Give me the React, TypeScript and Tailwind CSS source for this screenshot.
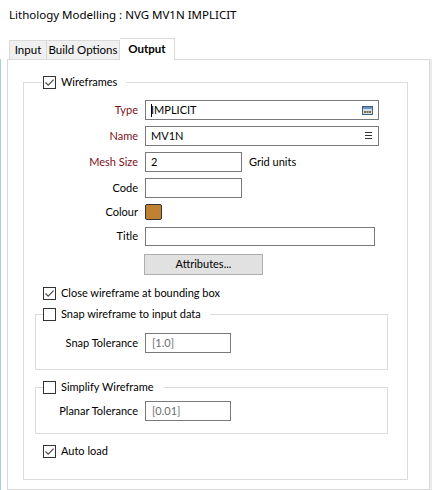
import React from "react";

const Check = ({ checked }: { checked?: boolean }) => (
  <span className="w-[13px] h-[13px] border border-[#333333] bg-white flex items-center justify-center shrink-0">
    {checked && (
      <svg width="11" height="11" viewBox="0 0 11 11">
        <path d="M1.5 5.5 L4.2 8.2 L9.6 2.6" stroke="#4d4d4d" strokeWidth="1.2" fill="none" />
      </svg>
    )}
  </span>
);

const Label = ({ children, w, red }: { children: React.ReactNode; w: string; red?: boolean }) => (
  <span className={`${w} text-right shrink-0 whitespace-nowrap ${red ? "text-[#7d1020]" : "text-black"}`}>{children}</span>
);

export default function App() {
  return (
    <div
      className="w-[443px] h-[490px] bg-white overflow-hidden text-[11px] text-black flex flex-col"
      style={{ fontFamily: 'Lato, "Noto Sans", sans-serif' }}
    >
      {/* title */}
      <div
        className="h-[38px] pl-[9px] pt-[6px] leading-[18px] text-[11.5px]"
        style={{ fontFamily: '"Noto Sans", sans-serif' }}
      >
        Lithology Modelling : NVG MV1N IMPLICIT
      </div>

      {/* tabs */}
      <div className="flex items-end h-[22px] pl-[9px] relative z-10 -mb-px text-[11.5px]">
        <div className="w-[38px] h-[19px] mb-px bg-[#f0f0f0] border border-b-0 border-[#d9d9d9] flex items-center justify-center leading-none">
          Input
        </div>
        <div className="w-[73px] h-[19px] mb-px bg-[#f0f0f0] border border-l-0 border-b-0 border-[#d9d9d9] flex items-center justify-center leading-none whitespace-nowrap">
          Build Options
        </div>
        <div className="w-[55px] h-[22px] bg-white border border-l-0 border-b-0 border-[#d9d9d9] flex items-center justify-center font-bold leading-none pb-[2px]">
          Output
        </div>
      </div>

      {/* body */}
      <div className="flex flex-1">
        <div className="w-px bg-[#a9cdef] self-stretch" />
        <div className="ml-[6px] w-[423px] border border-[#d9d9d9] pl-[15px] pt-[22px] shadow-[2px_0_0_#ebebeb]">
          {/* outer group */}
          <div className="w-[385px] border border-[#dcdcdc] pb-[21px] flex flex-col">
            <div className="-mt-[7px] ml-[18px] self-start flex items-center gap-[5px] bg-white pl-px pr-[9px] h-[13px]">
              <Check checked />
              <span>Wireframes</span>
            </div>

            {/* Type */}
            <div className="mt-[11px] h-[20px] flex items-center">
              <Label w="w-[114px]" red>Type</Label>
              <div className="ml-[7px] w-[234px] h-[20px] border border-[#7a7a7a] flex items-center pl-[5px] pr-[5px]">
                <span className="w-px h-[13px] bg-black mr-[-1px]" />
                <span className="flex-1">IMPLICIT</span>
                <svg width="11" height="9" viewBox="0 0 11 9">
                  <rect x="0.5" y="0.5" width="10" height="8" fill="#cfe0f2" stroke="#3f5f82" />
                  <rect x="1" y="1" width="9" height="2" fill="#6f93bd" />
                  <rect x="2" y="5" width="2" height="2" fill="#8a6a2e" />
                  <rect x="4.5" y="5" width="2" height="2" fill="#8a6a2e" />
                  <rect x="7" y="5" width="2" height="2" fill="#8a6a2e" />
                </svg>
              </div>
            </div>

            {/* Name */}
            <div className="mt-[6px] h-[20px] flex items-center">
              <Label w="w-[114px]" red>Name</Label>
              <div className="ml-[7px] w-[234px] h-[20px] border border-[#7a7a7a] flex items-center pl-[5px] pr-[6px]">
                <span className="flex-1">MV1N</span>
                <svg width="7" height="8" viewBox="0 0 7 8">
                  <rect x="0" y="0" width="7" height="1" fill="#333" />
                  <rect x="0" y="3" width="7" height="1" fill="#333" />
                  <rect x="0" y="6" width="7" height="1" fill="#333" />
                </svg>
              </div>
            </div>

            {/* Mesh Size */}
            <div className="mt-[6px] h-[20px] flex items-center">
              <Label w="w-[114px]" red>Mesh Size</Label>
              <div className="ml-[7px] w-[97px] h-[20px] border border-[#7a7a7a] flex items-center pl-[5px]">2</div>
              <span className="ml-[7px]">Grid units</span>
            </div>

            {/* Code */}
            <div className="mt-[6px] h-[20px] flex items-center">
              <Label w="w-[114px]">Code</Label>
              <div className="ml-[7px] w-[97px] h-[20px] border border-[#7a7a7a]" />
            </div>

            {/* Colour */}
            <div className="mt-[6px] h-[17px] flex items-center">
              <Label w="w-[114px]">Colour</Label>
              <div className="ml-[7px] w-[17px] h-[16px] border border-[#333333] rounded-[2px] bg-[#c08232] self-start" />
            </div>

            {/* Title */}
            <div className="mt-[6px] h-[19px] flex items-center">
              <Label w="w-[114px]">Title</Label>
              <div className="ml-[7px] w-[230px] h-[19px] border border-[#7a7a7a]" />
            </div>

            {/* Attributes */}
            <div className="mt-[8px] h-[21px] flex items-center">
              <div className="ml-[120px] w-[119px] h-[21px] bg-[#e1e1e1] border border-[#adadad] flex items-center justify-center">
                Attributes...
              </div>
            </div>

            {/* Close wireframe */}
            <div className="mt-[12px] h-[13px] ml-[19px] flex items-center gap-[5px]">
              <Check checked />
              <span>Close wireframe at bounding box</span>
            </div>

            {/* Snap group */}
            <div className="mt-[14px] ml-[11px] w-[353px] border border-[#dcdcdc] pb-[16px] flex flex-col">
              <div className="-mt-[7px] ml-[7px] self-start flex items-center gap-[5px] bg-white pr-[9px] h-[13px]">
                <Check />
                <span>Snap wireframe to input data</span>
              </div>
              <div className="mt-[12px] h-[20px] flex items-center">
                <Label w="w-[102px]">Snap Tolerance</Label>
                <div className="ml-[7px] w-[86px] h-[20px] border border-[#7a7a7a] flex items-center pl-[6px] text-[#6d6d6d]">
                  [1.0]
                </div>
              </div>
            </div>

            {/* Simplify group */}
            <div className="mt-[17px] ml-[11px] w-[353px] border border-[#dcdcdc] pb-[12px] flex flex-col">
              <div className="-mt-[7px] ml-[7px] self-start flex items-center gap-[5px] bg-white pr-[9px] h-[13px]">
                <Check />
                <span>Simplify Wireframe</span>
              </div>
              <div className="mt-[7px] h-[20px] flex items-center">
                <Label w="w-[102px]">Planar Tolerance</Label>
                <div className="ml-[7px] w-[86px] h-[20px] border border-[#7a7a7a] flex items-center pl-[6px] text-[#6d6d6d]">
                  [0.01]
                </div>
              </div>
            </div>

            {/* Auto load */}
            <div className="mt-[11px] h-[13px] ml-[19px] flex items-center gap-[5px]">
              <Check checked />
              <span>Auto load</span>
            </div>
          </div>
        </div>
      </div>
    </div>
  );
}
